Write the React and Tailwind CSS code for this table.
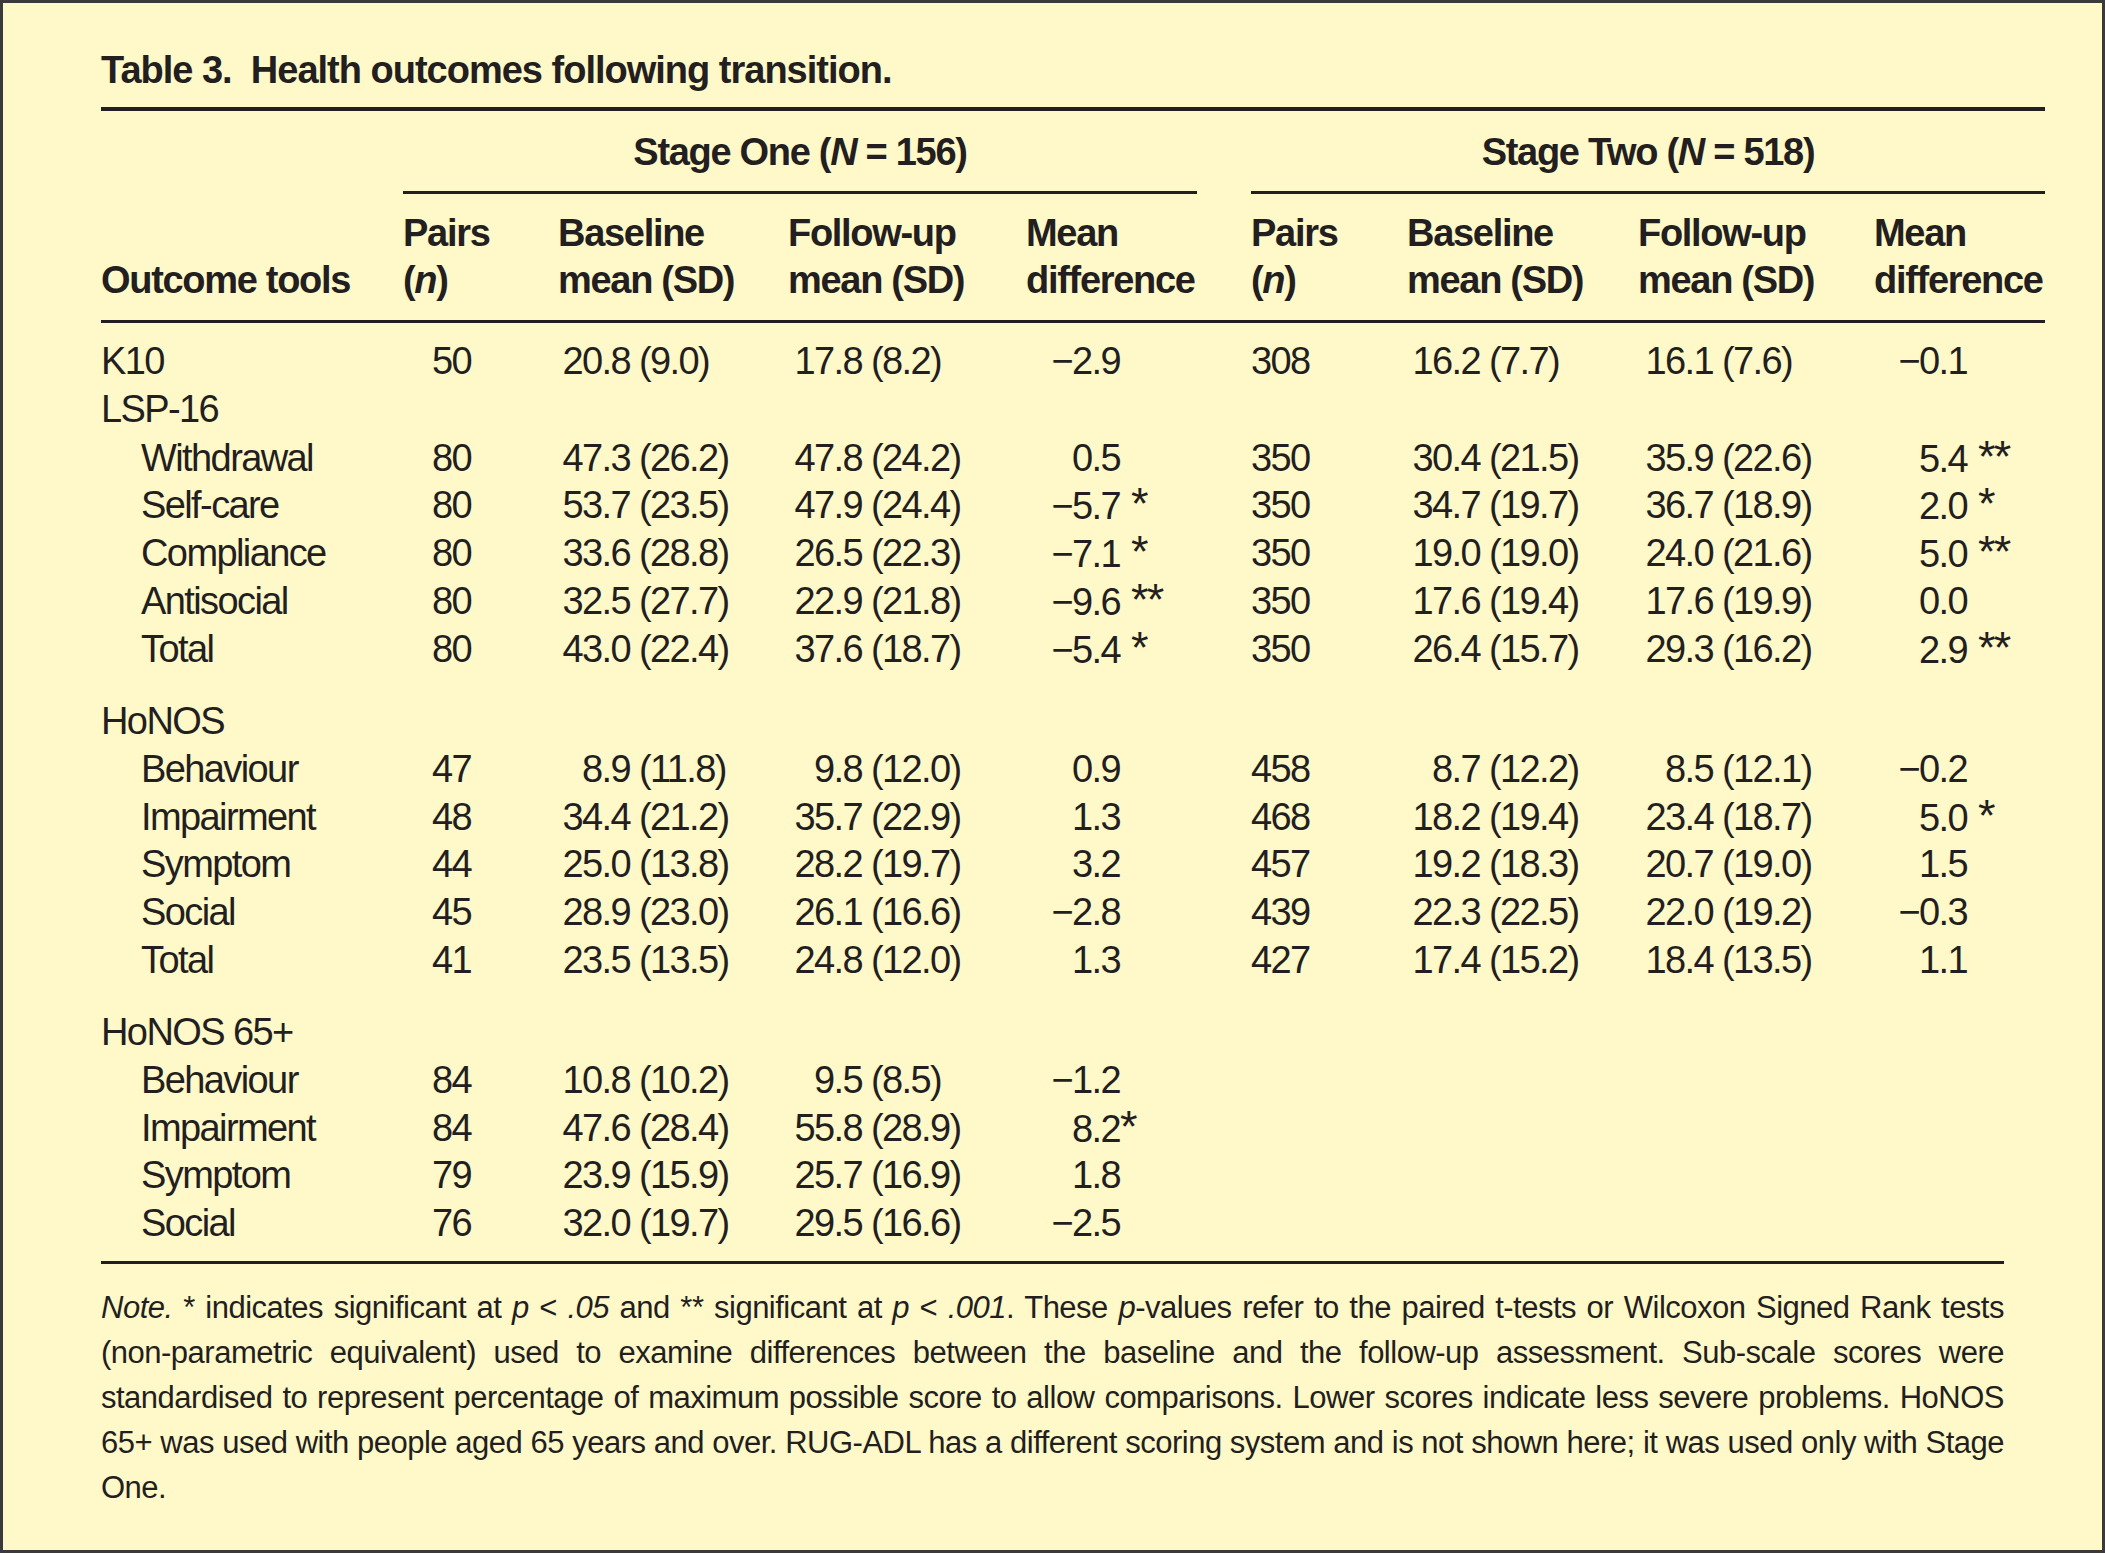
const REG = "font-['Liberation_Sans',Arial,sans-serif]";
const BOLD = "font-['Liberation_Sans',Arial,sans-serif] font-bold tracking-[-1.3px]";
const COLS = "grid grid-cols-[302px_155px_230px_238px_225px_156px_231px_236px_171px]";

const groups = [
  [
    { label: "K10", s1: ["50", "20.8", "9.0", "17.8", "8.2", "−2.9", ""], s2: ["308", "16.2", "7.7", "16.1", "7.6", "−0.1", ""] },
    { label: "LSP-16" },
    { label: "Withdrawal", sub: true, s1: ["80", "47.3", "26.2", "47.8", "24.2", "0.5", ""], s2: ["350", "30.4", "21.5", "35.9", "22.6", "5.4", " **"] },
    { label: "Self-care", sub: true, s1: ["80", "53.7", "23.5", "47.9", "24.4", "−5.7", " *"], s2: ["350", "34.7", "19.7", "36.7", "18.9", "2.0", " *"] },
    { label: "Compliance", sub: true, s1: ["80", "33.6", "28.8", "26.5", "22.3", "−7.1", " *"], s2: ["350", "19.0", "19.0", "24.0", "21.6", "5.0", " **"] },
    { label: "Antisocial", sub: true, s1: ["80", "32.5", "27.7", "22.9", "21.8", "−9.6", " **"], s2: ["350", "17.6", "19.4", "17.6", "19.9", "0.0", ""] },
    { label: "Total", sub: true, s1: ["80", "43.0", "22.4", "37.6", "18.7", "−5.4", " *"], s2: ["350", "26.4", "15.7", "29.3", "16.2", "2.9", " **"] },
  ],
  [
    { label: "HoNOS" },
    { label: "Behaviour", sub: true, s1: ["47", "8.9", "11.8", "9.8", "12.0", "0.9", ""], s2: ["458", "8.7", "12.2", "8.5", "12.1", "−0.2", ""] },
    { label: "Impairment", sub: true, s1: ["48", "34.4", "21.2", "35.7", "22.9", "1.3", ""], s2: ["468", "18.2", "19.4", "23.4", "18.7", "5.0", " *"] },
    { label: "Symptom", sub: true, s1: ["44", "25.0", "13.8", "28.2", "19.7", "3.2", ""], s2: ["457", "19.2", "18.3", "20.7", "19.0", "1.5", ""] },
    { label: "Social", sub: true, s1: ["45", "28.9", "23.0", "26.1", "16.6", "−2.8", ""], s2: ["439", "22.3", "22.5", "22.0", "19.2", "−0.3", ""] },
    { label: "Total", sub: true, s1: ["41", "23.5", "13.5", "24.8", "12.0", "1.3", ""], s2: ["427", "17.4", "15.2", "18.4", "13.5", "1.1", ""] },
  ],
  [
    { label: "HoNOS 65+" },
    { label: "Behaviour", sub: true, s1: ["84", "10.8", "10.2", "9.5", "8.5", "−1.2", ""] },
    { label: "Impairment", sub: true, s1: ["84", "47.6", "28.4", "55.8", "28.9", "8.2", "*"] },
    { label: "Symptom", sub: true, s1: ["79", "23.9", "15.9", "25.7", "16.9", "1.8", ""] },
    { label: "Social", sub: true, s1: ["76", "32.0", "19.7", "29.5", "16.6", "−2.5", ""] },
  ],
];

const MeanSd = ({ m, sd, w }) => (
  <div className="flex whitespace-nowrap">
    <span className={`${w} text-right`}>{m}</span>
    <span>{"\u00a0(" + sd + ")"}</span>
  </div>
);

const Diff = ({ d, star, w }) => (
  <div className="flex items-baseline whitespace-nowrap">
    <span className={`${w} text-right`}>{d}</span>
    {star && <span className="text-[45px] leading-none">{star.replace(" ", "\u00a0")}</span>}
  </div>
);

const Row = ({ row }) => {
  const { label, sub, s1, s2 } = row;
  return (
    <div className={`${COLS} h-[47.8px] items-center leading-[47.8px]`}>
      <div className={sub ? "pl-[40px]" : ""}>{label}</div>
      {s1 ? (
        <>
          <div className="w-[68px] text-right">{s1[0]}</div>
          <MeanSd m={s1[1]} sd={s1[2]} w="w-[72px]" />
          <MeanSd m={s1[3]} sd={s1[4]} w="w-[74px]" />
          <Diff d={s1[5]} star={s1[6]} w="w-[94px]" />
        </>
      ) : (
        <div className="col-span-4" />
      )}
      {s2 ? (
        <>
          <div>{s2[0]}</div>
          <MeanSd m={s2[1]} sd={s2[2]} w="w-[73px]" />
          <MeanSd m={s2[3]} sd={s2[4]} w="w-[75px]" />
          <Diff d={s2[5]} star={s2[6]} w="w-[93px]" />
        </>
      ) : (
        <div className="col-span-4" />
      )}
    </div>
  );
};

const HeadCell = ({ top, bottom }) => (
  <div className="flex flex-col leading-[47px]">
    <div>{top}</div>
    <div>{bottom}</div>
  </div>
);

const I = ({ children }) => <span className="italic">{children}</span>;

const noteLines = [
  <>
    <I>Note.</I> * indicates significant at <I>p</I> &lt; <I>.05</I> and ** significant at <I>p</I> &lt; <I>.001</I>. These <I>p</I>-values refer to the paired t-tests or Wilcoxon Signed Rank tests
  </>,
  <>(non-parametric equivalent) used to examine differences between the baseline and the follow-up assessment. Sub-scale scores were</>,
  <>standardised to represent percentage of maximum possible score to allow comparisons. Lower scores indicate less severe problems. HoNOS</>,
  <>65+ was used with people aged 65 years and over. RUG-ADL has a different scoring system and is not shown here; it was used only with Stage</>,
];

export default function App() {
  return (
    <div className={`w-[2105px] h-[1553px] overflow-hidden box-border border-[3px] border-[#3a3a3a] bg-[#fff9c9] text-[#231f20] pt-[43px] pl-[98px] ${REG}`}>
      <div className="w-[1944px]">
        <h1 className={`${BOLD} text-[38px] leading-[48px] tracking-[-1px]`}>
          Table 3.{"\u00a0 "}Health outcomes following transition.
        </h1>
        <div className="mt-[13px] h-[4px] bg-[#231f20]" />

        <div className={`${BOLD} text-[38px]`}>
          <div className={`${COLS} mt-[17px]`}>
            <div />
            <div className="col-span-4 mr-[54px] flex flex-col">
              <div className="text-center leading-[48px]">
                Stage One (<I>N</I>{"\u00a0=\u00a0"}156)
              </div>
              <div className="mt-[15px] h-[3px] bg-[#231f20]" />
            </div>
            <div className="col-span-4 flex flex-col">
              <div className="text-center leading-[48px]">
                Stage Two (<I>N</I>{"\u00a0=\u00a0"}518)
              </div>
              <div className="mt-[15px] h-[3px] bg-[#231f20]" />
            </div>
          </div>

          <div className={`${COLS} mt-[16px]`}>
            <div className="self-end leading-[47px]">Outcome tools</div>
            <HeadCell top="Pairs" bottom={<>(<I>n</I>)</>} />
            <HeadCell top="Baseline" bottom="mean (SD)" />
            <HeadCell top="Follow-up" bottom="mean (SD)" />
            <HeadCell top="Mean" bottom="difference" />
            <HeadCell top="Pairs" bottom={<>(<I>n</I>)</>} />
            <HeadCell top="Baseline" bottom="mean (SD)" />
            <HeadCell top="Follow-up" bottom="mean (SD)" />
            <HeadCell top="Mean" bottom="difference" />
          </div>
        </div>
        <div className="mt-[16px] h-[3px] bg-[#231f20]" />

        <div className="mt-[15px] text-[38px] tracking-[-1.6px]">
          {groups.map((g, gi) => (
            <div key={gi} className={gi > 0 ? (gi === 1 ? "mt-[25.2px]" : "mt-[24.2px]") : ""}>
              {g.map((r, ri) => (
                <Row key={ri} row={r} />
              ))}
            </div>
          ))}
        </div>

        <div className="mt-[13px] h-[3px] w-[1903px] bg-[#231f20]" />

        <div className="mt-[21px] w-[1903px] text-[31px] leading-[45px] tracking-[-0.5px]">
          {noteLines.map((l, i) => (
            <p key={i} className="text-justify [text-align-last:justify]">
              {l}
            </p>
          ))}
          <p>One.</p>
        </div>
      </div>
    </div>
  );
}
